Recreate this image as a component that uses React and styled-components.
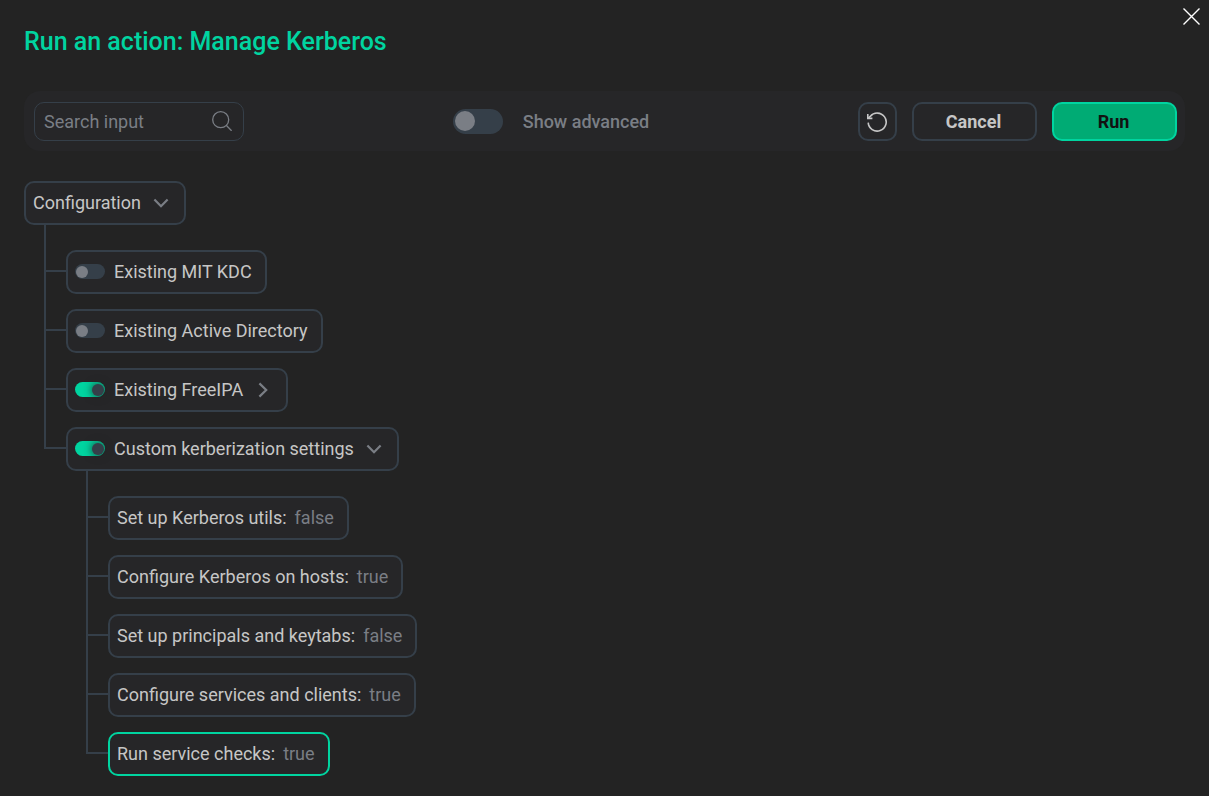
import { useState } from "react";
import styled, { createGlobalStyle, css } from "styled-components";

const tree = {
  title: "Configuration",
  open: true,
  children: [
    { title: "Existing MIT KDC", active: false },
    { title: "Existing Active Directory", active: false },
    { title: "Existing FreeIPA", active: true, open: false, children: [] },
    {
      title: "Custom kerberization settings",
      active: true,
      open: true,
      children: [
        { title: "Set up Kerberos utils", value: "false" },
        { title: "Configure Kerberos on hosts", value: "true" },
        { title: "Set up principals and keytabs", value: "false" },
        { title: "Configure services and clients", value: "true" },
        { title: "Run service checks", value: "true", selected: true },
      ],
    },
  ],
};

function ChevronIcon({ open }) {
  return (
    <svg width="20" height="20" viewBox="0 0 20 20" fill="none" stroke="currentColor" strokeWidth="2.2" aria-hidden="true">
      <path d={open ? "M3.4 6.4 10 13.2 16.6 6.4" : "M6.4 3.4 13.2 10 6.4 16.6"} />
    </svg>
  );
}

function Node({ node }) {
  const [active, setActive] = useState(node.active);
  const [open, setOpen] = useState(node.open);
  const expandable = node.children !== undefined;
  const toggleOpen = () => setOpen(!open);

  let content;
  if (node.active !== undefined) {
    content = (
      <NodeBox>
        <NodeLabel>
          <Switch type="checkbox" checked={active} onChange={(e) => setActive(e.target.checked)} />
          {node.title}
        </NodeLabel>
        {expandable && (
          <ArrowButton aria-label={`Expand ${node.title}`} aria-expanded={open} onClick={toggleOpen}>
            <ChevronIcon open={open} />
          </ArrowButton>
        )}
      </NodeBox>
    );
  } else if (expandable) {
    content = (
      <NodeBox as="button" aria-expanded={open} onClick={toggleOpen}>
        {node.title}
        <ArrowBox>
          <ChevronIcon open={open} />
        </ArrowBox>
      </NodeBox>
    );
  } else {
    content = (
      <NodeBox as="button" $selected={node.selected}>
        {node.title}:<Value>{node.value}</Value>
      </NodeBox>
    );
  }

  return (
    <NodeContainer>
      {content}
      {open && node.children.length > 0 && (
        <Branch>
          {node.children.map((child, index) => (
            <BranchItem key={child.title}>
              <Connector>
                <Elbow $first={index === 0} />
                {index < node.children.length - 1 && <Stem />}
              </Connector>
              <BranchContent $first={index === 0}>
                <Node node={child} />
              </BranchContent>
            </BranchItem>
          ))}
        </Branch>
      )}
    </NodeContainer>
  );
}

function App() {
  const [advanced, setAdvanced] = useState(false);

  return (
    <Page>
      <GlobalStyle />
      <CloseButton aria-label="Close">
        <svg width="17" height="17" viewBox="0 0 17 17" fill="none" stroke="currentColor" strokeWidth="1.4">
          <path d="M0.5 0.5 16.5 16.5M16.5 0.5 0.5 16.5" />
        </svg>
      </CloseButton>
      <Title>Run an action: Manage Kerberos</Title>
      <Toolbar>
        <SearchBox>
          <SearchInput placeholder="Search input" aria-label="Search input" />
          <svg width="20" height="20" viewBox="0 0 20 20" fill="none" stroke="currentColor" strokeWidth="1.3" aria-hidden="true">
            <circle cx="8.7" cy="8.7" r="8" />
            <path d="M14.2 14.2 19.6 19.8" />
          </svg>
        </SearchBox>
        <AdvancedLabel>
          <Switch type="checkbox" $large checked={advanced} onChange={(e) => setAdvanced(e.target.checked)} />
          Show advanced
        </AdvancedLabel>
        <Actions>
          <IconButton aria-label="Reset">
            <svg width="20" height="20" viewBox="0 0 20 20" fill="none" stroke="currentColor" strokeWidth="1.6">
              <path d="M1.2 10.6A9 9 0 1 0 3.2 4.4L1 6.4" />
              <path d="M0.8 2V6.4H5.4" />
            </svg>
          </IconButton>
          <Button>Cancel</Button>
          <Button $primary>Run</Button>
        </Actions>
      </Toolbar>
      <Node node={tree} />
    </Page>
  );
}

export default App;

const GlobalStyle = createGlobalStyle`
  * {
    box-sizing: border-box;
  }
  body {
    margin: 0;
    background: #232323;
    color: #c6c6c6;
    font-family: Roboto, "Liberation Sans", sans-serif;
    font-size: 18px;
    line-height: 24px;
  }
  button, input {
    font: inherit;
    color: inherit;
  }
  button {
    cursor: pointer;
  }
  svg {
    display: block;
    flex-shrink: 0;
  }
`;

const Page = styled.main`
  position: relative;
  padding: 24px 24px 20px;
`;

const CloseButton = styled.button`
  position: absolute;
  top: 8px;
  right: 9px;
  padding: 0;
  border: none;
  background: none;
  color: #ffffff;
`;

const Title = styled.h1`
  margin: 0 0 31px;
  font-size: 25px;
  line-height: 36px;
  font-weight: 500;
  color: #00d4a0;
`;

const Toolbar = styled.div`
  display: flex;
  justify-content: space-between;
  align-items: center;
  height: 60px;
  margin-bottom: 30px;
  padding: 0 8px 0 10px;
  border-radius: 16px;
  background: #262628;
`;

const SearchBox = styled.div`
  display: flex;
  align-items: center;
  width: 210px;
  height: 39px;
  padding: 0 11px 0 9px;
  border: 1px solid #353f49;
  border-radius: 10px;
  color: #7a7e85;
`;

const SearchInput = styled.input`
  flex: 1;
  min-width: 0;
  padding: 1px 0 0;
  border: none;
  outline: none;
  background: none;

  &::placeholder {
    color: #7a7e85;
    opacity: 1;
  }
`;

const AdvancedLabel = styled.label`
  display: flex;
  align-items: flex-end;
  gap: 20px;
  font-weight: 500;
  color: #7a7e85;
`;

const Switch = styled.input`
  appearance: none;
  display: flex;
  align-items: center;
  flex-shrink: 0;
  width: ${(props) => (props.$large ? "50px" : "30px")};
  height: ${(props) => (props.$large ? "25px" : "15px")};
  margin: ${(props) => (props.$large ? "0" : "0 0 1px")};
  padding: ${(props) => (props.$large ? "2px" : "1px")};
  border-radius: 13px;
  background: #353f49;
  cursor: pointer;

  &::before {
    content: "";
    width: ${(props) => (props.$large ? "20px" : "12px")};
    height: ${(props) => (props.$large ? "20px" : "12px")};
    border-radius: 50%;
    background: #7a7e85;
  }

  &:checked {
    justify-content: flex-end;
    background: #00d4a0;
  }

  &:checked::before {
    background: #353f49;
    box-shadow: 0 0 8px #232323;
  }
`;

const Actions = styled.div`
  display: flex;
  gap: 15px;
`;

const Button = styled.button`
  width: 125px;
  height: 39px;
  padding: 1px 2px 0 0;
  border: 2px solid #353f49;
  border-radius: 10px;
  background: none;
  font-weight: 700;

  ${(props) =>
    props.$primary &&
    css`
      border-color: #00d4a0;
      background: #00ab74;
      color: #121212;
    `}
`;

const IconButton = styled(Button)`
  display: flex;
  align-items: center;
  justify-content: center;
  width: 39px;
`;

const NodeContainer = styled.div`
  display: flex;
  flex-direction: column;
  align-items: flex-start;
`;

const NodeBox = styled.div`
  display: flex;
  align-items: center;
  height: 44px;
  padding: 0 13px 0 7px;
  border: 2px solid ${(props) => (props.$selected ? "#00d4a0" : "#353f49")};
  border-radius: 10px;
  background: #262628;
  white-space: nowrap;
`;

const NodeLabel = styled.label`
  display: flex;
  align-items: center;
  gap: 9px;
`;

const ArrowBox = styled.span`
  margin-left: 10px;
  color: #7a7e85;
`;

const ArrowButton = styled.button`
  margin-left: 10px;
  padding: 0;
  border: none;
  background: none;
  color: #7a7e85;
`;

const Value = styled.span`
  margin-left: 8px;
  color: #7a7e85;
`;

const Branch = styled.ul`
  margin: 0 0 0 20px;
  padding: 0;
  list-style: none;
`;

const BranchItem = styled.li`
  display: flex;
`;

const BranchContent = styled.div`
  padding-top: ${(props) => (props.$first ? "25px" : "15px")};
`;

const Connector = styled.div`
  display: flex;
  flex-direction: column;
  width: 22px;
`;

const Elbow = styled.div`
  height: ${(props) => (props.$first ? "47px" : "37px")};
  border-left: 2px solid #353f49;
  border-bottom: 2px solid #353f49;
`;

const Stem = styled.div`
  flex: 1;
  border-left: 2px solid #353f49;
`;
